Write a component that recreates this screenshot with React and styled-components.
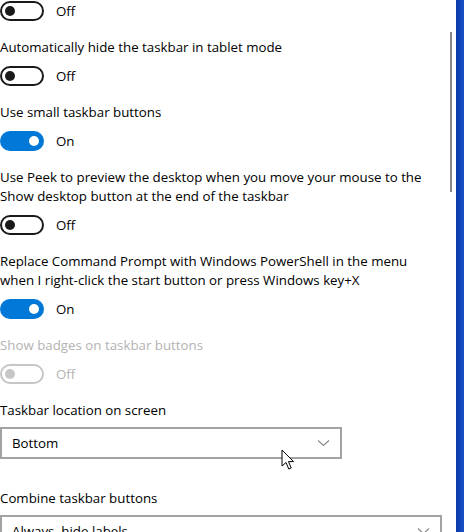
import React from "react";
import styled, { createGlobalStyle } from "styled-components";

const Global = createGlobalStyle`
  html, body { margin: 0; padding: 0; background: #fff; }
  body { font-family: "Open Sans", "Noto Sans", sans-serif; color: #000; }
`;

const Page = styled.div`
  display: flex;
  width: 464px;
  height: 532px;
  overflow: hidden;
  position: relative;
  background: #fff;
`;

const Content = styled.div`
  flex: 1;
  display: flex;
  flex-direction: column;
  padding-top: 1px;
  & > * { flex-shrink: 0; }
`;

const ScrollTrack = styled.div`
  width: 6px;
  display: flex;
  justify-content: flex-start;
`;

const Thumb = styled.div`
  width: 2px;
  height: 160px;
  margin-top: 32px;
  background: #8c8686;
`;

const BlueEdge = styled.div`
  width: 8px;
  background: linear-gradient(90deg, #0a3aa6 0%, #1547bd 60%, #1b4fc6 100%);
`;

const Setting = styled.div`
  display: flex;
  flex-direction: column;
  margin-top: 16.5px;
`;

const Label = styled.div`
  font-size: 13.3px;
  line-height: 19px;
  color: ${(p) => (p.$disabled ? "#b3b3b3" : "#000")};
  margin-bottom: ${(p) => (p.$tight ? 7.5 : 9.5)}px;
  white-space: nowrap;
`;

const ToggleRow = styled.div`
  display: flex;
  align-items: center;
  height: 20px;
  gap: 12px;
`;

const Toggle = styled.div`
  box-sizing: border-box;
  width: 44px;
  height: 20px;
  border-radius: 10px;
  border: 2px solid ${(p) => (p.$on ? "#0078d7" : p.$disabled ? "#c6c6c6" : "#1a1a1a")};
  background: ${(p) => (p.$on ? "#0078d7" : "#fff")};
  display: flex;
  align-items: center;
  justify-content: ${(p) => (p.$on ? "flex-end" : "flex-start")};
  padding: 0 3px;
`;

const Knob = styled.div`
  width: 10px;
  height: 10px;
  border-radius: 50%;
  background: ${(p) => (p.$on ? "#fff" : p.$disabled ? "#c6c6c6" : "#1a1a1a")};
`;

const State = styled.span`
  font-size: 13.3px;
  line-height: 20px;
  color: ${(p) => (p.$disabled ? "#b3b3b3" : "#000")};
`;

const Select = styled.div`
  box-sizing: border-box;
  width: ${(p) => p.$w}px;
  height: 32px;
  border: 2px solid #a3a3a3;
  display: flex;
  align-items: center;
  justify-content: space-between;
  padding: 0 10px;
  font-size: 13.3px;
`;

const Section = styled.div`
  display: flex;
  flex-direction: column;
  margin-top: ${(p) => p.$gap}px;
`;

const Cursor = styled.svg`
  position: absolute;
  left: 281px;
  top: 449px;
`;

function Switch({ on, disabled }) {
  return (
    <ToggleRow>
      <Toggle $on={on} $disabled={disabled}>
        <Knob $on={on} $disabled={disabled} />
      </Toggle>
      <State $disabled={disabled}>{on ? "On" : "Off"}</State>
    </ToggleRow>
  );
}

const Chevron = () => (
  <svg width="13" height="8" viewBox="0 0 13 8">
    <path d="M1 1.5 L6.5 6.5 L12 1.5" fill="none" stroke="#8a8a8a" strokeWidth="1.2" />
  </svg>
);

const settings = [
  { label: ["Automatically hide the taskbar in tablet mode"], on: false },
  { label: ["Use small taskbar buttons"], on: true },
  {
    label: [
      "Use Peek to preview the desktop when you move your mouse to the",
      "Show desktop button at the end of the taskbar",
    ],
    on: false,
  },
  {
    label: [
      "Replace Command Prompt with Windows PowerShell in the menu",
      "when I right-click the start button or press Windows key+X",
    ],
    on: true,
  },
  { label: ["Show badges on taskbar buttons"], on: false, disabled: true },
];

export default function App() {
  return (
    <>
      <Global />
      <Page>
        <Content>
          <Switch on={false} />
          {settings.map((s, i) => (
            <Setting key={i}>
              <Label $disabled={s.disabled}>
                {s.label.map((l, j) => (
                  <div key={j}>{l}</div>
                ))}
              </Label>
              <Switch on={s.on} disabled={s.disabled} />
            </Setting>
          ))}
          <Section $gap={16.5}>
            <Label $tight>Taskbar location on screen</Label>
            <Select $w={342}>
              <span>Bottom</span>
              <Chevron />
            </Select>
          </Section>
          <Section $gap={29.5}>
            <Label $tight>Combine taskbar buttons</Label>
            <Select $w={442}>
              <span>Always, hide labels</span>
              <Chevron />
            </Select>
          </Section>
        </Content>
        <ScrollTrack>
          <Thumb />
        </ScrollTrack>
        <BlueEdge />
        <Cursor width="14" height="22" viewBox="0 0 14 22">
          <path
            d="M1 1 L1 17 L5 13.5 L7.8 20 L10.2 19 L7.5 12.6 L12.5 12.6 Z"
            fill="#fff"
            stroke="#000"
            strokeWidth="1"
            strokeLinejoin="round"
          />
        </Cursor>
      </Page>
    </>
  );
}
